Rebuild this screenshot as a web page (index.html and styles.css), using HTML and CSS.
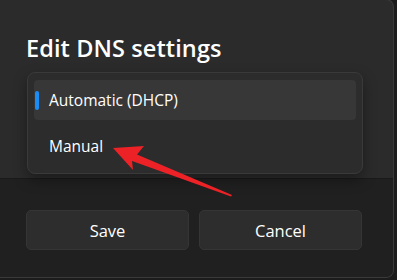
FILE: index.html
```html
<!DOCTYPE html>
<html lang="en">
<head>
  <meta charset="UTF-8">
  <title>Edit DNS settings</title>
  <link rel="stylesheet" href="styles.css">
</head>
<body>
  <div class="dialog">
    <div class="dialog-body">
      <h1>Edit DNS settings</h1>
    </div>
    <div class="dialog-footer">
      <button class="btn">Save</button>
      <button class="btn">Cancel</button>
    </div>

    <!-- dropdown opened over the dialog -->
    <div class="menu">
      <div class="menu-item selected">Automatic (DHCP)</div>
      <div class="menu-item">Manual</div>
    </div>
  </div>

  <!-- annotation arrow -->
  <svg class="arrow" width="397" height="280" viewBox="0 0 397 280">
    <polygon points="113,148 144,146 137,154.5 232,195 231,196.5 132,161 133,170" fill="#ec2227"/>
  </svg>
</body>
</html>
```

FILE: styles.css
```css
body {
  margin: 0;
  width: 397px;
  height: 280px;
  background: #1c1c1c;
  font-family: "Open Sans", "Noto Sans", sans-serif;
  color: #fff;
  overflow: hidden;
  position: relative;
}
.dialog {
  position: relative;
  margin: -1px 0 0 -5px;
  width: 399px;
  height: 279px;
  background: #2b2b2b;
  border: 1px solid #3a3a3a;
  border-left: none;
  border-radius: 0 8px 8px 0;
  box-sizing: border-box;
  overflow: hidden;
  display: flex;
  flex-direction: column;
}
.dialog-body {
  height: 178px;
  padding: 0 31px;
  box-sizing: border-box;
}
.dialog-body h1 {
  margin: 34px 0 0 0;
  font-size: 23.5px;
  font-weight: 600;
  line-height: 28px;
  letter-spacing: 0.1px;
}
.dialog-footer {
  flex: 1;
  background: #202020;
  border-top: 1px solid #1a1a1a;
  padding: 31px 31px 0 31px;
  display: flex;
  gap: 10px;
}
.btn {
  flex: 1;
  height: 40px;
  background: #2d2d2d;
  border: 1px solid #353535;
  border-radius: 5px;
  color: #fff;
  font-family: inherit;
  font-size: 16.5px;
}
.menu {
  position: absolute;
  left: 32px;
  top: 72px;
  width: 336px;
  padding: 7px 6px;
  box-sizing: border-box;
  background: #2c2c2c;
  border: 1px solid #3a3a3a;
  border-radius: 8px;
  box-shadow: 0 6px 14px rgba(0, 0, 0, 0.35);
  display: flex;
  flex-direction: column;
  gap: 6px;
}
.menu-item {
  position: relative;
  height: 40px;
  line-height: 40px;
  padding-left: 15px;
  border-radius: 4px;
  font-size: 15.5px;
  color: #fff;
}
.menu-item.selected {
  background: #373737;
}
.menu-item.selected::before {
  content: "";
  position: absolute;
  left: 1px;
  top: 11px;
  width: 4px;
  height: 19px;
  border-radius: 2px;
  background: #1a8cf5;
}
.arrow {
  position: absolute;
  left: 0;
  top: 0;
}
```
